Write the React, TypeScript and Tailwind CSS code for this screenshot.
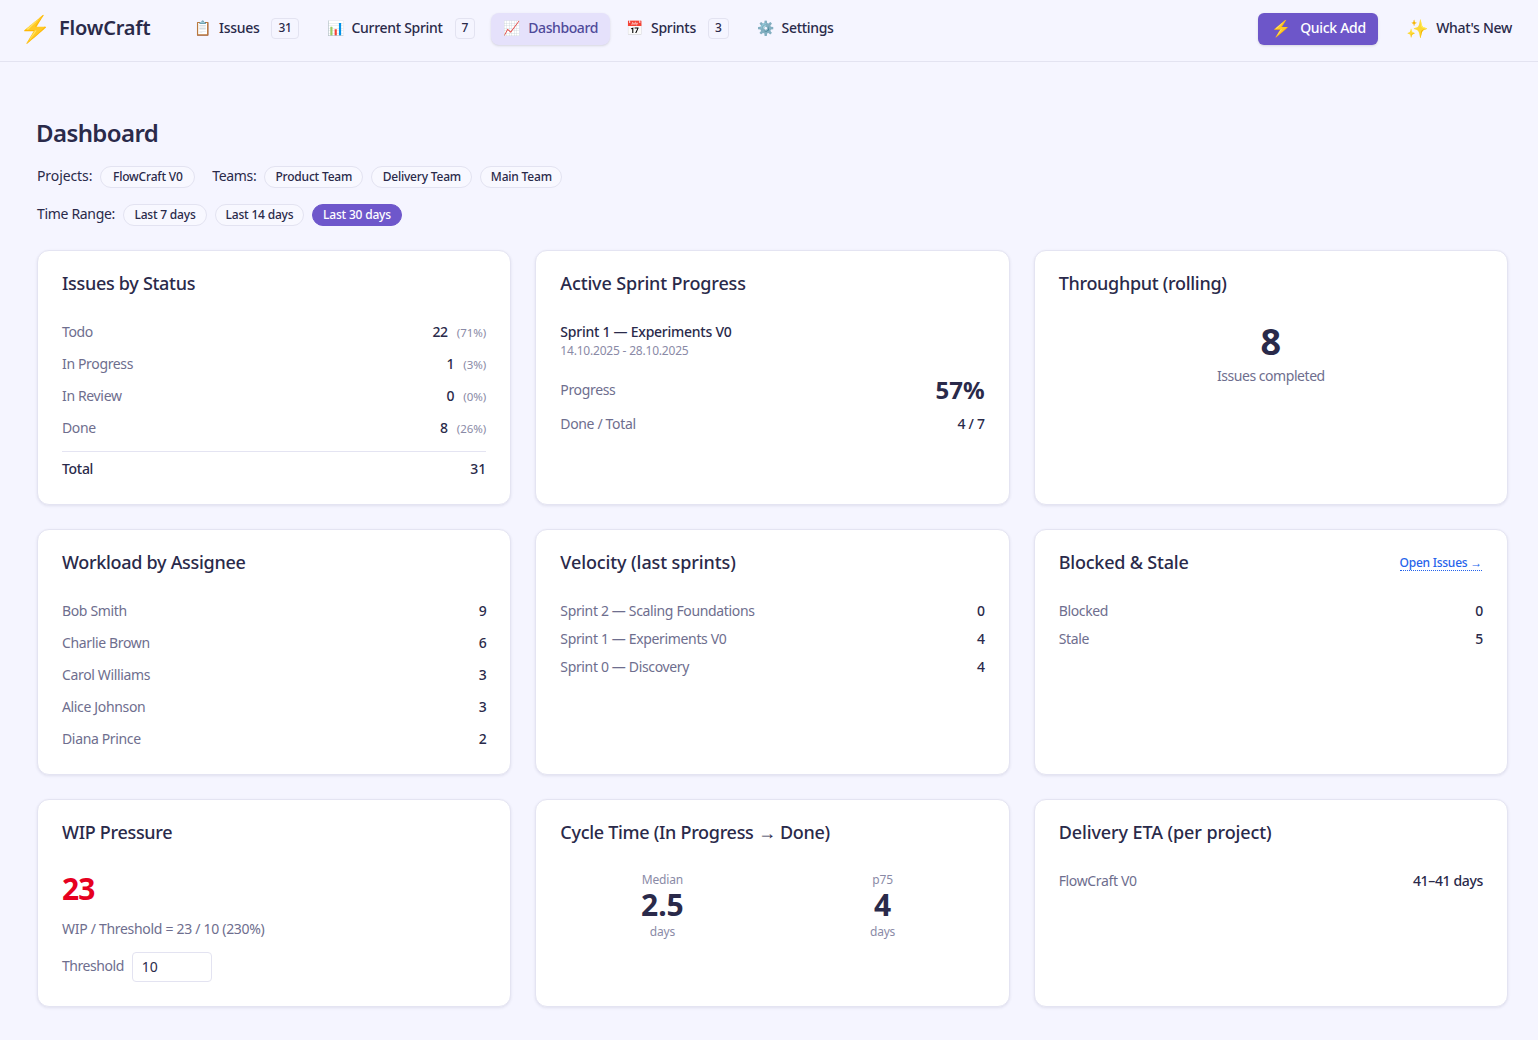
const NAV = [
  { icon: '📋', label: 'Issues', badge: '31' },
  { icon: '📊', label: 'Current Sprint', badge: '7' },
  { icon: '📈', label: 'Dashboard', active: true },
  { icon: '📅', label: 'Sprints', badge: '3' },
  { icon: '⚙️', label: 'Settings' },
];

function Pill({ label, width, active }: { label: string; width: string; active?: boolean }) {
  return (
    <span
      className={`h-[22px] flex items-center justify-center rounded-full border text-xs font-medium tracking-[-0.2px] ${width} ${
        active ? 'bg-[#6e57cb] border-[#6e57cb] text-white' : 'bg-[#f8f8ff] border-[#e3e3f1] text-[#2a2a4a]'
      }`}
    >
      {label}
    </span>
  );
}

function Card({
  title,
  titleTracking = 'tracking-[-0.3px]',
  action,
  children,
}: {
  title: string;
  titleTracking?: string;
  action?: React.ReactNode;
  children: React.ReactNode;
}) {
  return (
    <div className="bg-white border border-[#e4e4f2] rounded-xl shadow-[0_1px_3px_rgba(40,40,90,0.1)] p-6">
      <div className="flex items-center justify-between h-[18px] mb-[29px]">
        <h3 className={`-mt-[3px] text-lg leading-[18px] font-medium text-[#2a2a4a] ${titleTracking}`}>{title}</h3>
        {action}
      </div>
      {children}
    </div>
  );
}

function Row({ label, value, note }: { label: string; value: string; note?: string }) {
  return (
    <div className="flex items-center justify-between h-5 text-sm">
      <span className="text-[#6e6e8e] tracking-[-0.35px]">{label}</span>
      <span className="flex items-baseline gap-[9px] text-[#2a2a4a] font-medium tracking-[-0.35px]">
        {value}
        {note && <span className="text-[11.5px] font-normal tracking-normal text-[#8a8aa6]">{note}</span>}
      </span>
    </div>
  );
}

function Stat({ label, value }: { label: string; value: string }) {
  return (
    <div className="flex flex-col items-center pt-px">
      <span className="text-xs leading-4 tracking-[-0.2px] text-[#8a8aa6]">{label}</span>
      <span className="mt-px text-[30px] leading-8 font-bold text-[#2a2a4a]">{value}</span>
      <span className="mt-[3px] text-xs leading-4 tracking-[-0.2px] text-[#8a8aa6]">days</span>
    </div>
  );
}

export default function App() {
  return (
    <div className="min-h-[1040px] bg-[#f5f5ff] font-['Noto_Sans',sans-serif] text-[#2a2a4a]">
      <header className="h-[62px] border-b border-[#e3e3f1] flex items-start justify-between pl-[19px] pr-[26px] pt-[13px]">
        <div className="flex items-center">
          <span className="flex items-center gap-2 w-[163px] h-8 pb-[2px]">
            <span className="text-[26px] leading-8">⚡</span>
            <span className="text-xl leading-8 font-semibold tracking-[-0.2px]">FlowCraft</span>
          </span>
          <nav className="flex items-center gap-1">
            {NAV.map(n => (
              <a
                key={n.label}
                className={`h-8 px-3 pb-[2px] flex items-center gap-2 rounded-lg text-sm font-medium ${
                  n.active ? 'bg-[#e5e1fb] text-[#4f4a9a] shadow-sm tracking-[-0.4px]' : 'tracking-[-0.3px]'
                }`}
              >
                <span className="leading-none tracking-normal">{n.icon}</span>
                {n.label}
                {n.badge && (
                  <span className="ml-1 h-[21px] min-w-[20px] px-[6px] flex items-center justify-center rounded border border-[#e3e3f1] text-xs">
                    {n.badge}
                  </span>
                )}
              </a>
            ))}
          </nav>
        </div>
        <div className="flex items-center gap-7">
          <button className="h-8 w-[120px] pb-[2px] flex items-center gap-[9px] pl-[13px] rounded-md bg-[#6d56c9] text-white text-sm font-medium tracking-[-0.3px] shadow-sm">
            <span className="text-base leading-none tracking-normal">⚡</span>
            Quick Add
          </button>
          <span className="h-8 pb-[2px] flex items-center gap-2 text-sm font-medium tracking-[-0.3px]">
            <span className="text-[18px] leading-none tracking-normal">✨</span>
            What's New
          </span>
        </div>
      </header>

      <main className="pl-[37px] pr-[30px] pt-[56px]">
        <h1 className="-ml-px text-2xl leading-[30px] font-semibold tracking-[-0.6px]">Dashboard</h1>
        <div className="mt-[18px] flex items-center h-[22px] gap-2">
          <span className="pb-[2px] text-sm tracking-[-0.1px]">Projects:</span>
          <Pill label="FlowCraft V0" width="w-[95px]" />
          <span className="pb-[2px] text-sm tracking-[-0.35px] ml-[9px]">Teams:</span>
          <Pill label="Product Team" width="w-[99px]" />
          <Pill label="Delivery Team" width="w-[101px]" />
          <Pill label="Main Team" width="w-[82px]" />
        </div>
        <div className="mt-4 flex items-center h-[22px] gap-2">
          <span className="pb-[2px] text-sm tracking-[-0.32px]">Time Range:</span>
          <Pill label="Last 7 days" width="w-[84px]" />
          <Pill label="Last 14 days" width="w-[89px]" />
          <Pill label="Last 30 days" width="w-[90px]" active />
        </div>

        <div className="mt-6 grid grid-cols-3 gap-6">
          <Card title="Issues by Status">
            <div className="flex flex-col gap-3">
              <Row label="Todo" value="22" note="(71%)" />
              <Row label="In Progress" value="1" note="(3%)" />
              <Row label="In Review" value="0" note="(0%)" />
              <Row label="Done" value="8" note="(26%)" />
            </div>
            <div className="mt-[13px] pt-[5px] border-t border-[#e4e4f2] flex items-center justify-between h-[29px] text-sm font-medium">
              <span className="tracking-[-0.3px]">Total</span>
              <span>31</span>
            </div>
          </Card>

          <Card title="Active Sprint Progress" titleTracking="tracking-[-0.15px]">
            <div className="text-sm leading-5 font-medium tracking-[-0.25px]">Sprint 1 — Experiments V0</div>
            <div className="text-xs leading-4 mt-[1px] tracking-[-0.2px] text-[#8a8aa6]">14.10.2025 - 28.10.2025</div>
            <div className="flex items-center justify-between h-8 mt-[15px] text-sm tracking-[-0.35px] text-[#6e6e8e]">
              Progress
              <span className="text-2xl font-bold tracking-normal text-[#2a2a4a]">57%</span>
            </div>
            <div className="flex items-center justify-between h-5 mt-[8px] text-sm tracking-[-0.35px] text-[#6e6e8e]">
              Done / Total
              <span className="font-medium tracking-[-0.3px] text-[#2a2a4a]">4 / 7</span>
            </div>
          </Card>

          <Card title="Throughput (rolling)">
            <div className="flex flex-col items-center">
              <span className="text-4xl leading-10 font-bold">8</span>
              <span className="text-sm leading-5 mt-[4px] tracking-[-0.45px] text-[#6e6e8e]">Issues completed</span>
            </div>
          </Card>

          <Card title="Workload by Assignee">
            <div className="flex flex-col gap-3 pb-px">
              <Row label="Bob Smith" value="9" />
              <Row label="Charlie Brown" value="6" />
              <Row label="Carol Williams" value="3" />
              <Row label="Alice Johnson" value="3" />
              <Row label="Diana Prince" value="2" />
            </div>
          </Card>

          <Card title="Velocity (last sprints)" titleTracking="tracking-[-0.1px]">
            <div className="flex flex-col gap-2">
              <Row label="Sprint 2 — Scaling Foundations" value="0" />
              <Row label="Sprint 1 — Experiments V0" value="4" />
              <Row label="Sprint 0 — Discovery" value="4" />
            </div>
          </Card>

          <Card
            title="Blocked & Stale"
            titleTracking="tracking-[-0.2px]"
            action={
              <a className="text-xs text-[#2563eb] font-medium tracking-[-0.25px] border-b border-dotted border-[#2563eb] leading-[14px] mr-px">
                Open Issues →
              </a>
            }
          >
            <div className="flex flex-col gap-2">
              <Row label="Blocked" value="0" />
              <Row label="Stale" value="5" />
            </div>
          </Card>

          <Card title="WIP Pressure">
            <div className="text-[30px] leading-9 font-bold tracking-[-1px] text-[#e6001f]">23</div>
            <div className="mt-3 text-sm leading-5 tracking-[-0.3px] text-[#6e6e8e]">WIP / Threshold = 23 / 10 (230%)</div>
            <div className="mt-[13px] flex items-center gap-2 text-sm text-[#6e6e8e]">
              <span className="pb-[2px] tracking-[-0.45px]">Threshold</span>
              <input
                defaultValue="10"
                className="w-20 h-[30px] pl-[9px] pb-[2px] rounded border border-[#e3e3f1] text-sm text-[#2a2a4a] outline-none"
              />
            </div>
          </Card>

          <Card title="Cycle Time (In Progress → Done)">
            <div className="grid grid-cols-2 gap-4 text-center">
              <Stat label="Median" value="2.5" />
              <Stat label="p75" value="4" />
            </div>
          </Card>

          <Card title="Delivery ETA (per project)" titleTracking="tracking-[-0.1px]">
            <Row label="FlowCraft V0" value="41–41 days" />
          </Card>
        </div>
      </main>
    </div>
  );
}
